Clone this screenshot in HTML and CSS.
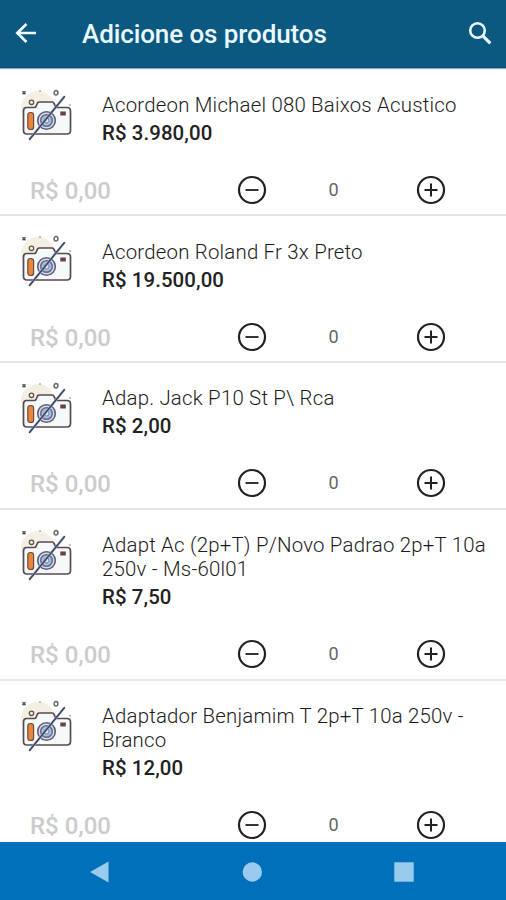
FILE: index.html
```html
<!DOCTYPE html>
<html lang="pt-BR">
<head>
<meta charset="utf-8">
<title>Adicione os produtos</title>
<link rel="stylesheet" href="styles.css">
</head>
<body>
<svg class="defs" aria-hidden="true">
  <symbol id="camera" viewBox="0 0 56 56">
    <circle cx="18" cy="21" r="17" fill="#f4efe3"/>
    <path d="M6.500 20.500H14.500Q15.500 20.500 16 19.500L17.500 16Q18 15 19.500 15H32Q33.500 15 34 16.500L36 20.500H47Q50.500 20.500 50.500 24V43.500Q50.500 47 47 47H7Q3.500 47 3.500 43.500V24Q3.500 20.500 6.500 20.500Z" fill="#f4f9f9" stroke="#594951" stroke-width="1.700"/>
    <rect x="7.800" y="25.500" width="5.800" height="17" rx="2.600" fill="#e88639" stroke="#704a43" stroke-width="1.200"/>
    <circle cx="26.500" cy="33.500" r="8.800" fill="#d4dcec" stroke="#625d77" stroke-width="1.600"/>
    <circle cx="26.500" cy="33.500" r="5.800" fill="#a9bfdc" stroke="#686b91" stroke-width="1.500"/>
    <circle cx="26.500" cy="33.500" r="2.500" fill="#dce9f4" stroke="#6585ae"/>
    <rect x="40.300" y="24.500" width="5.500" height="4" fill="#6c4144"/>
    <circle cx="11.500" cy="15.300" r="2.200" fill="#faf5e9" stroke="#5f554d" stroke-width="1.300"/>
    <ellipse cx="36" cy="5.800" rx="1.900" ry="2.300" fill="#fff" stroke="#696969" stroke-width="1.500"/>
    <path d="M2.500 4.300L5.500 7.300M5.500 4.300L2.500 7.300" stroke="#565052" stroke-width="1.500"/>
    <path d="M20 3V5M50 17V19" stroke="#888" stroke-width="1"/>
    <path d="M9.500 52.500L44.500 9.500" stroke="#a8b8dd" stroke-width="2.500"/>
    <path d="M9.500 52.500L44.500 9.500" stroke="#414358" stroke-width="1.500" stroke-linecap="round"/>
  </symbol>
  <symbol id="minus" viewBox="0 0 30 30">
    <circle cx="15" cy="15" r="13" fill="none" stroke="#222" stroke-width="2.200"/>
    <path d="M8.500 15H21.500" stroke="#333" stroke-width="2"/>
  </symbol>
  <symbol id="plus" viewBox="0 0 30 30">
    <circle cx="15" cy="15" r="13" fill="none" stroke="#222" stroke-width="2.200"/>
    <path d="M8.500 15H21.500M15 8.500V21.500" stroke="#222" stroke-width="2"/>
  </symbol>
</svg>
<div class="app">
  <header class="toolbar">
    <svg class="back" viewBox="0 0 22 22"><path d="M21 11H2M11.500 2L2.300 11L11.500 20" fill="none" stroke="#f2fbff" stroke-width="2.700"/></svg>
    <h1 class="title">Adicione os produtos</h1>
    <svg class="search" viewBox="0 0 24 24"><circle cx="9.500" cy="9.500" r="7.300" fill="none" stroke="#e8f7ff" stroke-width="2.600"/><path d="M14.800 14.800L22.300 22.300" stroke="#e8f7ff" stroke-width="3.200"/></svg>
  </header>
  <main class="list">
    <article class="item">
      <div class="product"><svg class="photo"><use href="#camera"/></svg><div class="info"><p class="name">Acordeon Michael 080 Baixos Acustico</p><p class="price">R$ 3.980,00</p></div></div>
      <div class="controls"><span class="total">R$ 0,00</span><svg class="btn"><use href="#minus"/></svg><span class="qty">0</span><svg class="btn"><use href="#plus"/></svg></div>
    </article>
    <article class="item">
      <div class="product"><svg class="photo"><use href="#camera"/></svg><div class="info"><p class="name">Acordeon Roland Fr 3x Preto</p><p class="price">R$ 19.500,00</p></div></div>
      <div class="controls"><span class="total">R$ 0,00</span><svg class="btn"><use href="#minus"/></svg><span class="qty">0</span><svg class="btn"><use href="#plus"/></svg></div>
    </article>
    <article class="item">
      <div class="product"><svg class="photo"><use href="#camera"/></svg><div class="info"><p class="name">Adap. Jack P10 St P\ Rca</p><p class="price">R$ 2,00</p></div></div>
      <div class="controls"><span class="total">R$ 0,00</span><svg class="btn"><use href="#minus"/></svg><span class="qty">0</span><svg class="btn"><use href="#plus"/></svg></div>
    </article>
    <article class="item tall">
      <div class="product"><svg class="photo"><use href="#camera"/></svg><div class="info"><p class="name">Adapt Ac (2p+T) P/Novo Padrao 2p+T 10a<br>250v - Ms-60l01</p><p class="price">R$ 7,50</p></div></div>
      <div class="controls"><span class="total">R$ 0,00</span><svg class="btn"><use href="#minus"/></svg><span class="qty">0</span><svg class="btn"><use href="#plus"/></svg></div>
    </article>
    <article class="item tall">
      <div class="product"><svg class="photo"><use href="#camera"/></svg><div class="info"><p class="name">Adaptador Benjamim T 2p+T 10a 250v -<br>Branco</p><p class="price">R$ 12,00</p></div></div>
      <div class="controls"><span class="total">R$ 0,00</span><svg class="btn"><use href="#minus"/></svg><span class="qty">0</span><svg class="btn"><use href="#plus"/></svg></div>
    </article>
  </main>
  <nav class="navbar">
    <svg viewBox="0 0 20 22"><path d="M0 11L18.500 0.500V21.500Z" fill="#98cbed"/></svg>
    <svg viewBox="0 0 20 22"><circle cx="10.300" cy="11" r="9.700" fill="#98cbed"/></svg>
    <svg viewBox="0 0 20 22"><rect x="0.300" y="1.300" width="19.400" height="19.400" fill="#98cbed"/></svg>
  </nav>
</div>
</body>
</html>
```

FILE: styles.css
```css
* { box-sizing: border-box; }
body { margin: 0; background: #fff; font-family: Roboto, sans-serif; }
.defs { display: none; }
.app { width: 506px; height: 900px; display: flex; flex-direction: column; overflow: hidden; }
.toolbar { flex: none; height: 68px; background: #0b5980; border-bottom: 1px solid #094f74; display: flex; align-items: center; padding: 0 14px 0 15px; box-shadow: 0 1px 1px #92aabd; z-index: 1; }
.back { width: 22px; height: 22px; margin-top: -1px; }
.title { margin: 1px 0 0 45px; font-size: 26px; line-height: 32px; font-weight: 500; letter-spacing: -.1px; color: #e9f8ff; white-space: nowrap; }
.search { width: 24px; height: 24px; margin: -2px 0 0 auto; }
.list { flex: 1; min-height: 0; overflow: hidden; padding-top: 1.8px; }
.item { height: 146.7px; border-bottom: 2px solid #e6e6e6; padding-top: 17.500px; display: flex; flex-direction: column; }
.tall { height: 170.700px; }
.product { display: flex; gap: 26px; padding-left: 20px; }
.photo { width: 56px; height: 56px; flex: none; margin-top: -.5px; }
.info { padding-top: 5.700px; }
.name, .price { margin: 0; white-space: nowrap; }
.name { font-size: 20.400px; line-height: 24px; font-weight: 300; color: #1c1c1c; letter-spacing: .21px; }
.price { margin-top: 4px; font-size: 20.400px; line-height: 24px; font-weight: 500; color: #222; letter-spacing: .1px; }
.controls { margin-top: auto; height: 30px; margin-bottom: 9.500px; padding-left: 30px; display: grid; grid-template-columns: 207px 30px 149px 30px; align-items: center; }
.btn { width: 30px; height: 30px; }
.total { font-size: 24px; line-height: 28px; font-weight: 500; color: #ccc; padding-top: 2px; }
.qty { padding-right: 16px; text-align: center; font-size: 18px; line-height: 28px; color: #666; }
.navbar { flex: none; height: 58.500px; background: #0070bb; display: flex; justify-content: space-between; padding: 19px 92px 0 90px; }
.navbar svg { width: 20px; height: 22px; }
```
